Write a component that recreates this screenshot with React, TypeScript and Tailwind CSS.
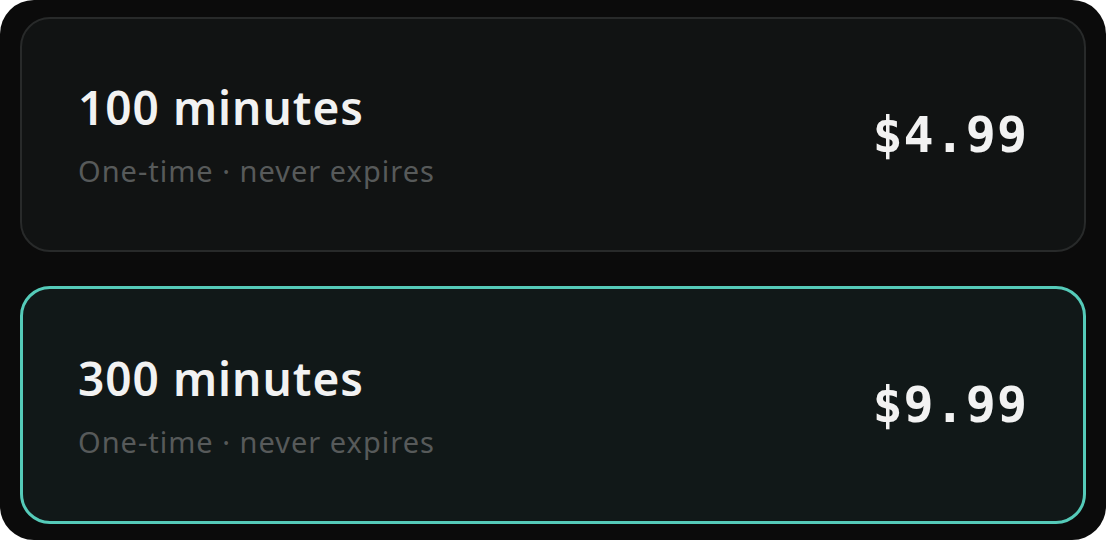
import React from "react";

function Plan({ title, price, selected }: { title: string; price: string; selected?: boolean }) {
  return (
    <div
      className={
        selected
          ? "flex h-[238px] items-center justify-between rounded-[30px] border-[3.5px] border-[#55cbb9] bg-[#111818] pl-[55px] pr-[55px]"
          : "flex h-[235px] items-center justify-between rounded-[30px] border-2 border-[#282a2a] bg-[#111313] pl-[56px] pr-[56px]"
      }
    >
      <div className="flex flex-col">
        <div className="text-[46px] font-semibold leading-[52px] tracking-[1px] text-[#f2f2f2] [font-family:'Noto_Sans',sans-serif]">
          {title}
        </div>
        <div className="mt-[21px] text-[29px] leading-[34px] tracking-[1px] text-[#575a5a] [font-family:'Noto_Sans',sans-serif]">
          One-time · never expires
        </div>
      </div>
      <div className="text-[50px] font-bold leading-none tracking-[1px] text-[#f2f2f2] [font-family:'DejaVu_Sans_Mono',monospace]">
        {price}
      </div>
    </div>
  );
}

export default function App() {
  return (
    <div className="min-h-[540px] w-[1106px] bg-white">
      <div className="flex h-[540px] flex-col gap-[34px] rounded-[34px] bg-[#0b0b0b] px-[20px] pt-[17px] pb-[16px]">
        <Plan title="100 minutes" price="$4.99" />
        <Plan title="300 minutes" price="$9.99" selected />
      </div>
    </div>
  );
}
